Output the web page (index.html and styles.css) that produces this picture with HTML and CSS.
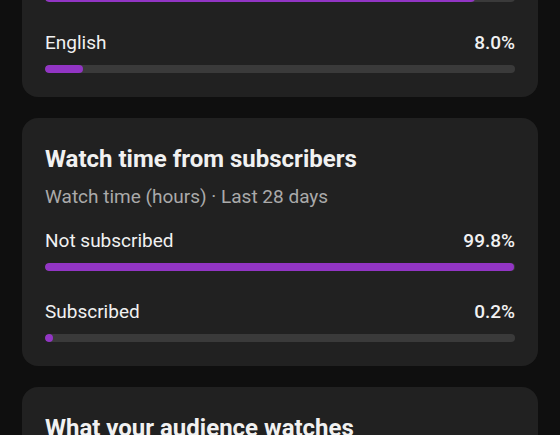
FILE: index.html
```html
<!DOCTYPE html>
<html lang="en">
<head>
<meta charset="utf-8">
<title>Audience</title>
<link rel="stylesheet" href="styles.css">
</head>
<body>
<main class="feed">
  <section class="card card-clipped">
    <div class="row">
      <div class="label-line"><span>Hindi</span><span class="value">91.5%</span></div>
      <div class="track"><div class="fill" style="width:91.5%"></div></div>
    </div>
    <div class="row">
      <div class="label-line"><span>English</span><span class="value">8.0%</span></div>
      <div class="track"><div class="fill" style="width:8%"></div></div>
    </div>
  </section>

  <section class="card">
    <h2 class="card-title">Watch time from subscribers</h2>
    <p class="card-sub">Watch time (hours) · Last 28 days</p>
    <div class="rows">
      <div class="row">
        <div class="label-line"><span>Not subscribed</span><span class="value">99.8%</span></div>
        <div class="track"><div class="fill" style="width:99.8%"></div></div>
      </div>
      <div class="row">
        <div class="label-line"><span>Subscribed</span><span class="value">0.2%</span></div>
        <div class="track"><div class="fill" style="width:0.2%"></div></div>
      </div>
    </div>
  </section>

  <section class="card">
    <h2 class="card-title">What your audience watches</h2>
    <p class="card-sub">Content your viewers watched on YouTube</p>
  </section>
</main>
</body>
</html>
```

FILE: styles.css
```css
html, body {
  margin: 0;
  padding: 0;
  background: #0f0f0f;
  color: #f1f1f1;
  font-family: Roboto, "Liberation Sans", sans-serif;
  overflow: hidden;
}

.feed {
  display: flex;
  flex-direction: column;
  gap: 21px;
  padding: 0 22px;
  margin-top: -66px;
}

.card {
  background: #212121;
  border-radius: 16px;
  padding: 26px 23px 24px;
}

.card-title {
  margin: 0;
  font-size: 24px;
  line-height: 30px;
  font-weight: 700;
  color: #f1f1f1;
}

.card-sub {
  margin: 11px 0 0;
  font-size: 19px;
  line-height: 24px;
  color: #aaaaaa;
}

.rows {
  margin-top: 20px;
}

.row + .row {
  margin-top: 29px;
}

.label-line {
  display: flex;
  justify-content: space-between;
  font-size: 19px;
  line-height: 24px;
  color: #f1f1f1;
}

.value {
  font-weight: 500;
}

.track {
  margin-top: 10px;
  height: 8px;
  border-radius: 4px;
  background: #3a3a3a;
  overflow: hidden;
}

.fill {
  height: 100%;
  min-width: 8px;
  border-radius: 4px;
  background: #9235c4;
}
```
